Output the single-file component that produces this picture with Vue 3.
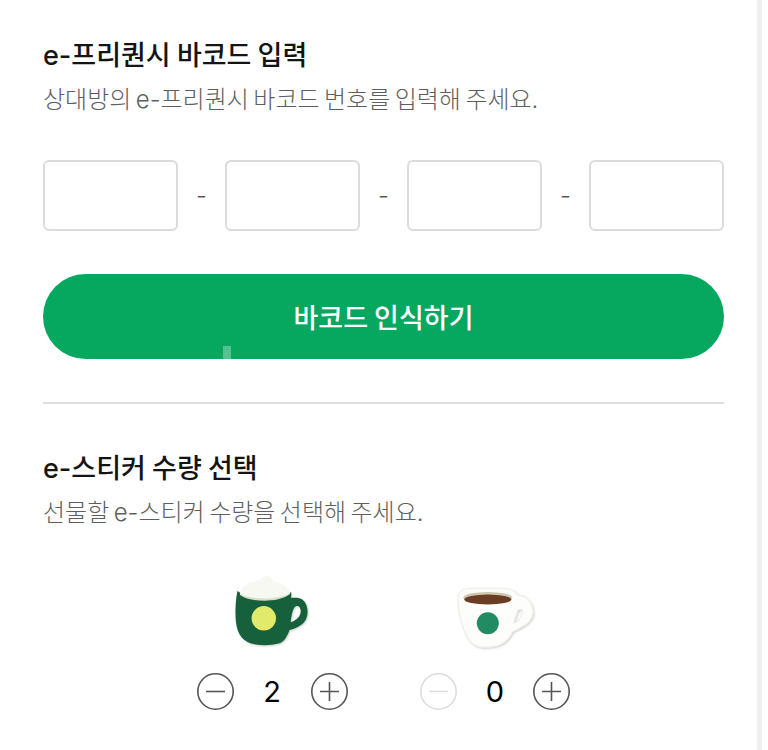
<script setup>
const boxes = [0, 1, 2, 3]
</script>

<template>
  <div class="page">
    <main class="content">
      <section class="barcode">
        <h2 class="title">e-프리퀀시 바코드 입력</h2>
        <p class="sub">상대방의 e-프리퀀시 바코드 번호를 입력해 주세요.</p>
        <div class="inputs">
          <template v-for="b in boxes" :key="b">
            <span v-if="b > 0" class="dash">-</span>
            <input class="box" type="text" />
          </template>
        </div>
        <button class="scan" type="button">
          바코드 인식하기
          <span class="glint"></span>
        </button>
      </section>
      <hr class="rule" />
      <section class="sticker">
        <h2 class="title">e-스티커 수량 선택</h2>
        <p class="sub">선물할 e-스티커 수량을 선택해 주세요.</p>
        <div class="cups">
          <div class="cup">
            <svg class="cup-art" width="100" height="90" viewBox="0 0 100 90">
              <defs>
                <filter id="soft" x="-20%" y="-20%" width="140%" height="140%">
                  <feDropShadow dx="1" dy="1" stdDeviation="1.2" flood-color="#000" flood-opacity="0.2" />
                </filter>
              </defs>
              <g transform="translate(3.5 0)">
                <path filter="url(#soft)" fill-rule="evenodd" fill="#17603a" d="M12 26 C11 30 10 38 10 48 C10 60 12 72 22 77 C30 81 44 81 54 78.300 C59 76.500 62 71 64 65 C72 63 79 59 81 53 C83.500 46 81.500 37 76 34 C73 32.500 69 32.500 65.700 33 L65.700 27 C55 36 25 36 12 26 Z M65.200 57.300 C69 56 74 53 75 48 C76 43 73 40 70 41.500 C67.500 43 66 50 65.200 57.300 Z" />
                <path fill="#dcdcc8" d="M14.500 27 C23 31 55 31 64.500 27 L64.500 29 C58 34 48 35.700 39 35.700 C29 35.700 20 34 14.500 30 Z" />
                <path fill="#f8f8f2" d="M14.500 28.500 C15 22 22 18 29 16.500 C33 15.500 35 15 36.500 13 C38.500 10.500 44 10 46 12.500 C47 14 47 15.500 49 16.500 C56 18 63 22 64.500 28 C58 32 48 33.500 39 33.500 C29 33.500 20 32 14.500 28.500 Z" />
                <circle cx="38.300" cy="53.300" r="12.200" fill="#e2ea6c" />
              </g>
            </svg>
            <div class="stepper">
              <button class="round" type="button" aria-label="감소">
                <svg width="37" height="37" viewBox="0 0 37 37"><circle cx="18.500" cy="18.500" r="17.700" /><path d="M9 18.500H28" /></svg>
              </button>
              <span class="count">2</span>
              <button class="round" type="button" aria-label="증가">
                <svg width="37" height="37" viewBox="0 0 37 37"><circle cx="18.500" cy="18.500" r="17.700" /><path d="M9 18.500H28M18.500 9V28" /></svg>
              </button>
            </div>
          </div>
          <div class="cup">
            <svg class="cup-art" width="100" height="90" viewBox="0 0 100 90">
              <path filter="url(#soft)" fill-rule="evenodd" fill="#fdfdfb" stroke="#efece4" stroke-width="1" d="M13 33 C13 27 17 24 24 23.500 C36 23 50 23 60 23.500 C66 24 70 26 72 30 C80 30 87 36 87.800 46 C88 53 84 58 78 61 C74 63.500 71 65 67.500 66.700 C65 71 63 75 59.500 77 C54 81.500 44 82.500 36 82 C27 81 22 73 18 62 C15 53 13 43 13 33 Z M68.800 58.300 C72 57.500 75 55 76 51 C77 48 77.500 46 77.500 45 C76 44 74 44 72.800 45 C71 49 70 54 68.800 58.300 Z" />
              <ellipse cx="42.800" cy="32.500" rx="24.500" ry="5.500" fill="#cfc6b0" />
              <ellipse cx="42.800" cy="34.500" rx="23.500" ry="5" fill="#6b3d22" />
              <circle cx="42.800" cy="58.300" r="11" fill="#218c62" />
            </svg>
            <div class="stepper">
              <button class="round off" type="button" aria-label="감소" disabled>
                <svg width="37" height="37" viewBox="0 0 37 37"><circle cx="18.500" cy="18.500" r="17.700" /><path d="M9 18.500H28" /></svg>
              </button>
              <span class="count">0</span>
              <button class="round" type="button" aria-label="증가">
                <svg width="37" height="37" viewBox="0 0 37 37"><circle cx="18.500" cy="18.500" r="17.700" /><path d="M9 18.500H28M18.500 9V28" /></svg>
              </button>
            </div>
          </div>
        </div>
      </section>
    </main>
    <div class="strip"></div>
  </div>
</template>

<style>
html, body { margin: 0; background: #fff; overflow: hidden; }
</style>

<style scoped>
.page {
  width: 768px;
  height: 750px;
  display: flex;
  overflow: hidden;
  background: #fff;
  font-family: Inter, "Noto Sans CJK KR", sans-serif;
}
.content {
  box-sizing: border-box;
  width: 757px;
  padding: 34px 33px 0 43px;
}
.strip {
  width: 5px;
  background: #efefef;
}
.title {
  margin: 0;
  height: 44px;
  line-height: 44px;
  font-size: 27px;
  font-weight: 500;
  word-spacing: -1px;
  color: #141414;
}
.sub {
  margin: 0;
  padding-top: 2px;
  height: 40px;
  line-height: 40px;
  font-size: 24px;
  font-weight: 300;
  word-spacing: -2.300px;
  color: #5e5e5e;
}
.inputs {
  display: flex;
  align-items: center;
  justify-content: space-between;
  margin-top: 40px;
}
.box {
  box-sizing: border-box;
  width: 135px;
  height: 71px;
  padding: 0;
  background: #fff;
  border: 2px solid #dcdcdc;
  border-radius: 6px;
  outline: none;
}
.dash {
  width: 47px;
  text-align: center;
  font-size: 24px;
  font-weight: 300;
  color: #555;
}
.scan {
  position: relative;
  display: block;
  width: 681px;
  height: 85px;
  margin-top: 43px;
  padding: 0;
  border: 0;
  border-radius: 43px;
  background: #06a860;
  color: #fff;
  font: 500 27px "Noto Sans CJK KR", sans-serif;
}
.glint {
  position: absolute;
  left: 180px;
  bottom: 0;
  width: 8px;
  height: 13px;
  background: rgba(255, 255, 255, 0.3);
}
.rule {
  height: 2px;
  margin: 43px 0 0;
  border: 0;
  background: #dedede;
}
.sticker {
  padding-top: 43px;
}
.cups {
  display: flex;
  justify-content: center;
  gap: 72px;
  margin-top: 32px;
}
.cup {
  width: 151px;
  display: flex;
  flex-direction: column;
  align-items: center;
}
.cup-art {
  display: block;
}
.stepper {
  width: 100%;
  display: flex;
  align-items: center;
  justify-content: space-between;
  margin-top: 18px;
}
.round {
  width: 37px;
  height: 37px;
  padding: 0;
  border: 0;
  background: none;
}
.round svg {
  display: block;
  fill: none;
  stroke: #555;
  stroke-width: 1.600;
}
.round.off svg {
  stroke: #dcdcdc;
}
.count {
  font-family: Inter, sans-serif;
  font-size: 29px;
  line-height: 37px;
  color: #000;
}
</style>
